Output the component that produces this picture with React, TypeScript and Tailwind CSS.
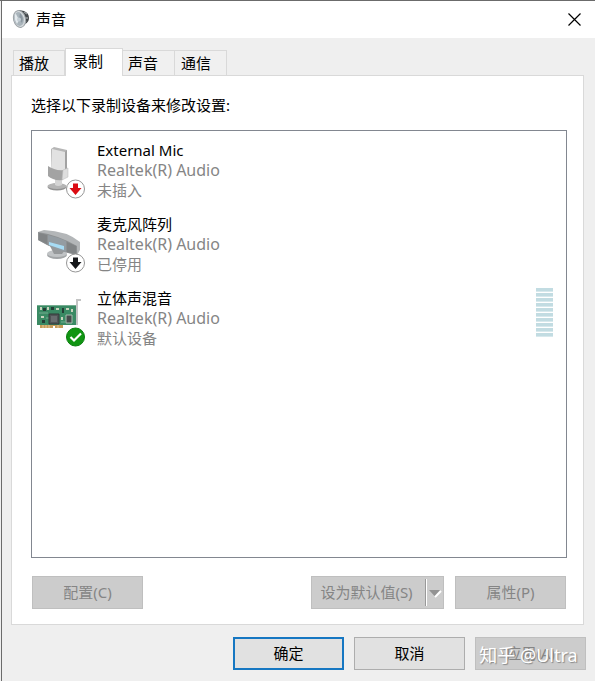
import { useState } from "react";
import type { ReactNode } from "react";

function SpeakerIcon() {
  return (
    <svg className="shrink-0" width="18" height="20" viewBox="0 0 18 20" aria-hidden="true">
      <path d="M7 1 L12 2 Q17 4 17 9 Q17 13 13 15 L9 18Z" fill="#44494c" />
      <path d="M12 3 L15 5 M14 9 H16 M12 14 L14 12" stroke="#959a9d" strokeWidth="1.500" fill="none" />
      <ellipse cx="7.500" cy="10" rx="6" ry="8.500" fill="#d6dbde" stroke="#9da3a7" transform="rotate(-14 7.500 10)" />
      <ellipse cx="7" cy="10" rx="4.800" ry="7" fill="#a9b4bb" transform="rotate(-14 7 10)" />
      <path d="M3.500 4 Q1.500 10 5 15 L7 11Z" fill="#e4eaee" />
      <path d="M8 4 Q12 8 10 14 L7 10Z" fill="#8a969f" />
      <circle cx="7" cy="10.500" r="2" fill="#c3cdd4" />
    </svg>
  );
}

function ArrowBadge({ color }: { color: string }) {
  return (
    <g>
      <circle cx="38.500" cy="48" r="9" fill="#fff" stroke="#969696" />
      <path d="M36 42.500 H41 V47 H44.500 L38.500 54 L32.500 47 H36Z" fill={color} />
    </g>
  );
}

function MicIcon() {
  return (
    <svg className="mt-px shrink-0" width="48" height="60" viewBox="0 0 48 60" aria-hidden="true">
      <ellipse cx="20" cy="46" rx="9.500" ry="3.500" fill="#929292" />
      <ellipse cx="20" cy="45" rx="9.500" ry="3" fill="#b5b5b5" />
      <path d="M18 38 H25 V44 Q21 46 18 44Z" fill="#d5d5d5" />
      <path d="M14 8 L17 6 L30 9 V31 L14 29Z" fill="#b6b6b6" />
      <path d="M15 8 L28 11 V32 L14 29Z" fill="#e2e2e2" />
      <path d="M28 11 L30 9 V30 L28 32Z" fill="#a2a2a2" />
      <path d="M11 25 Q18 30 27 29 L26 39 Q16 40 11 35Z" fill="#a3a3a3" />
      <path d="M26 29 L31 27 V36 L25 39Z" fill="#dedede" stroke="#bbbbbb" strokeWidth=".5" />
      <ArrowBadge color="#db0b12" />
    </svg>
  );
}

function ArrayIcon() {
  return (
    <svg className="mt-px shrink-0" width="48" height="60" viewBox="0 0 48 60" aria-hidden="true">
      <ellipse cx="20" cy="40" rx="10" ry="4" fill="#a2a5a7" />
      <ellipse cx="20" cy="38.500" rx="10" ry="3.500" fill="#c0c3c5" />
      <path d="M13 31 L28 35 L25 39 H17Z" fill="#96999b" />
      <path d="M1 17 L7 15 Q30 16 43 27 V35 L40 40 Q20 36 1 25Z" fill="#b3b6b8" />
      <path d="M1 17 Q21 20 40 31 V40 Q19 36 1 25Z" fill="#8d9092" />
      <path d="M11 20 Q20 22 29 26 V37 Q19 35 11 30Z" fill="#949ca2" />
      <path d="M12 27 L27 31 V35 L12 30Z" fill="#a7dcf5" />
      <path d="M2 18 L10 20 V29 L2 25Z M30 27 L39 31 V39 L30 37Z" fill="#818486" />
      <ArrowBadge color="#15171a" />
    </svg>
  );
}

function CardIcon() {
  return (
    <svg className="mt-px shrink-0" width="48" height="60" viewBox="0 0 48 60" aria-hidden="true">
      <path d="M3 35 H26 V39 H18 V37 H16 V39 H3Z" fill="#c69c59" />
      <path d="M6 35 V39 M9 35 V39 M12 35 V39 M21 35 V39" stroke="#e3c99a" />
      <path d="M0 16 H39 V36 H0Z" fill="#3a8a64" />
      <path d="M0 16.500 H39 M2 24 H11 M24 33 H28 M9 29 H12" stroke="#75ad90" />
      <path d="M12 25 H22 V35 H12Z" fill="#505557" stroke="#303b38" />
      <path d="M14 27 H20 V33 H14Z" fill="#686d6f" />
      <path d="M29 26 H35 V34 H29Z" fill="#454c4c" stroke="#a5bdad" />
      <path d="M6 19 H9 V22 H6Z M14 18 H17 V21 H14Z M25 19 H27 V24 H25Z M5 31 H8 V34 H5Z" fill="#253e36" />
      <path d="M3 18 H5 V21 H3Z M10 18 H12 V21 H10Z M19 19 H22 V21 H19Z M29 19 H32 V21 H29Z M34 20 H36 V23 H34Z M4 27 H7 V29 H4Z M24 28 H26 V31 H24Z" fill="#c9d3bd" />
      <path d="M40 36 V11 H44" fill="none" stroke="#c3c4c4" strokeWidth="2" />
      <circle cx="38.500" cy="48" r="9" fill="#109512" stroke="#087d0c" />
      <path d="M33.500 48 L37 51.500 L44 44.500" fill="none" stroke="#fff" strokeWidth="2.200" />
    </svg>
  );
}

interface Device {
  name: string;
  status: string;
  icon: ReactNode;
  metered: boolean;
}

const devices: Device[] = [
  { name: "External Mic", status: "未插入", icon: <MicIcon />, metered: false },
  { name: "麦克风阵列", status: "已停用", icon: <ArrayIcon />, metered: false },
  { name: "立体声混音", status: "默认设备", icon: <CardIcon />, metered: true },
];

const tabs = [
  { id: "playback", label: "播放" },
  { id: "recording", label: "录制" },
  { id: "sounds", label: "声音" },
  { id: "communications", label: "通信" },
];

function LevelMeter() {
  return (
    <div className="mr-2 flex flex-col gap-px self-start" role="meter" aria-label="音量" aria-valuenow={0} aria-valuemin={0} aria-valuemax={10}>
      {Array.from({ length: 10 }, (_, i) => (
        <span key={i} className="h-1 w-[17px] border-b border-[#d8e9ed] bg-[#c2dce2]" />
      ))}
    </div>
  );
}

const disabledButton = "h-[33px] w-[111px] border border-[#bfbfbf] bg-[#cccccc] pb-0.5 text-[#858585]";

export default function App() {
  const [selected, setSelected] = useState("recording");
  return (
    <main className="flex min-h-screen flex-col border-t border-[#6b6b6b] bg-[#efefef] pl-px font-['Noto_Sans','Noto_Sans_CJK_SC',sans-serif] text-[15px] leading-5 text-black">
      <div className="flex flex-1 flex-col border-l border-[#6b6b6b]">
        <header className="flex h-[37px] items-center bg-white pr-3 pb-px pl-2.5">
          <SpeakerIcon />
          <h1 className="ml-1.5 flex-1">声音</h1>
          <button aria-label="关闭" className="p-0.5">
            <svg width="13" height="13" viewBox="0 0 13 13" aria-hidden="true">
              <path d="M.5 .5 L12.500 12.500 M12.500 .5 L.5 12.500" stroke="#000" strokeWidth="1.200" />
            </svg>
          </button>
        </header>

        <div className="flex flex-1 flex-col pt-2.5 pr-[11px] pl-[9px]">
          <div role="tablist" className="flex h-[27px] items-end pl-0.5">
            {tabs.map((tab) => (
              <button
                key={tab.id}
                role="tab"
                aria-selected={selected === tab.id}
                onClick={() => setSelected(tab.id)}
                className={
                  selected === tab.id
                    ? "z-10 -mb-px h-7 w-[58px] border-x border-t border-[#d9d9d9] bg-white pb-1 pl-[7px] text-left"
                    : "h-[25px] w-[52px] border-t border-r border-[#d9d9d9] bg-[#f0f0f0] pl-[5px] text-left first:border-l last:pl-1.5"
                }
              >
                {tab.label}
              </button>
            ))}
          </div>

          <section role="tabpanel" className="flex flex-1 flex-col border border-[#d9d9d9] bg-white px-4 pt-[19px] pb-[15px]">
            <p className="pl-[3px]">选择以下录制设备来修改设置:</p>
            <ul className="mt-[15px] ml-[3px] flex flex-1 flex-col gap-[13px] border border-[#828790] px-[5px] pt-[9px]">
              {devices.map((device) => (
                <li key={device.name} className="flex">
                  {device.icon}
                  <div className="ml-3 flex-1">
                    <p>{device.name}</p>
                    <p className="text-[16px] leading-5 text-[#858585]">Realtek(R) Audio</p>
                    <p className="text-[#858585]">{device.status}</p>
                  </div>
                  {device.metered && <LevelMeter />}
                </li>
              ))}
            </ul>
            <div className="mt-[18px] mr-px ml-1 flex justify-between">
              <button disabled className={disabledButton}>配置(C)</button>
              <div className="flex gap-[11px]">
                <div className="flex h-[33px] w-[133px] items-center border border-[#bfbfbf] bg-[#cccccc] text-[#858585]">
                  <button disabled className="flex-1 pr-1 pb-0.5">设为默认值(S)</button>
                  <button disabled aria-label="更多默认选项" className="flex h-[27px] w-[18px] items-center border-l border-[#999999] shadow-[inset_1px_0_#ffffff]">
                    <svg width="16" height="10" viewBox="0 0 16 10" aria-hidden="true">
                      <path d="M9 9 L15 3" stroke="#fff" strokeWidth="2" />
                      <path d="M3 2 H14 L8.500 8Z" fill="#929292" />
                    </svg>
                  </button>
                </div>
                <button disabled className={disabledButton}>属性(P)</button>
              </div>
            </div>
          </section>
        </div>

        <footer className="flex justify-end gap-2.5 pt-3 pr-[9px] pb-[11px]">
          <button className="h-[33px] w-[111px] border-2 border-[#1677c2] bg-[#e1e1e1] pb-0.5">确定</button>
          <button className="h-[33px] w-[111px] border border-[#adadad] bg-[#e1e1e1] pb-0.5">取消</button>
          <div className="relative">
            <button disabled className={disabledButton}>应用(A)</button>
            <span className="pointer-events-none absolute inset-x-0 top-1.5 pr-1 text-center text-[18px] leading-6 whitespace-nowrap text-white [text-shadow:1px_1px_1px_#888888]">
              知乎 @Ultra
            </span>
          </div>
        </footer>
      </div>
    </main>
  );
}
